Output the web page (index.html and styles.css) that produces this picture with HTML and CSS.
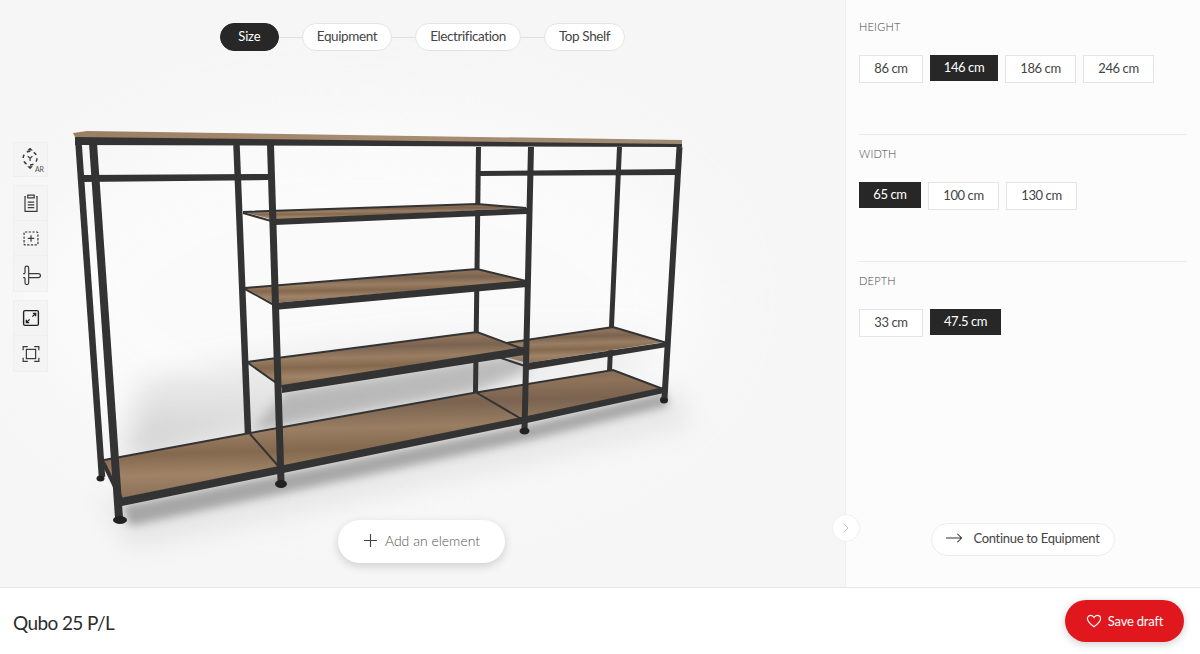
FILE: index.html
```html
<!DOCTYPE html>
<html lang="en">
<head>
<meta charset="utf-8">
<title>Qubo 25 P/L</title>
<link rel="stylesheet" href="styles.css">
</head>
<body>
<div class="app">
  <main class="workspace">
    <section class="stage">
      <svg class="scene" viewBox="0 0 845 587" aria-label="Qubo 25 shelving unit">
        <defs>
          <filter id="b4" x="-30%" y="-30%" width="160%" height="160%"><feGaussianBlur stdDeviation="4"/></filter>
          <filter id="b12" x="-30%" y="-50%" width="160%" height="200%"><feGaussianBlur stdDeviation="12"/></filter>
          <filter id="b40" x="-30%" y="-50%" width="160%" height="200%"><feGaussianBlur stdDeviation="40"/></filter>
          <linearGradient id="wood" x1="0" y1="0" x2=".12" y2="1">
            <stop offset="0" stop-color="#78624e"/><stop offset=".18" stop-color="#8e7259"/>
            <stop offset=".32" stop-color="#7a6350"/><stop offset=".5" stop-color="#9a7e63"/>
            <stop offset=".66" stop-color="#84694f"/><stop offset=".82" stop-color="#a08367"/>
            <stop offset="1" stop-color="#8a7058"/>
          </linearGradient>
          <linearGradient id="top" x1="0" y1="0" x2="1" y2="0">
            <stop offset="0" stop-color="#9b7f62"/><stop offset=".5" stop-color="#a78c6f"/><stop offset="1" stop-color="#a08a73"/>
          </linearGradient>
          <linearGradient id="wall" x1="0" y1="0" x2="0" y2="1">
            <stop offset="0" stop-color="#999" stop-opacity="0"/><stop offset="1" stop-color="#888" stop-opacity=".4"/>
          </linearGradient>
        </defs>
        <ellipse class="glow" cx="370" cy="300" rx="340" ry="190" filter="url(#b40)"/>
        <polygon class="wall" points="140,380 290,350 480,320 660,325 640,372 478,396 250,436 125,462"/>
        <polygon class="under" points="285,392 522,352 530,370 474,392 250,432"/>
        <polygon class="floor" points="122,506 530,424 665,392 668,406 530,440 130,526" filter="url(#b4)"/>
        <polygon class="floor-soft" points="100,500 530,414 680,390 690,425 530,465 130,548" filter="url(#b12)"/>

        <g class="frame back">
          <line x1="78.5" y1="143" x2="102" y2="477"/>
          <line x1="236.5" y1="145" x2="248" y2="433"/>
          <line class="thin" x1="478.5" y1="147" x2="475.5" y2="393"/>
          <line class="thin" x1="619.5" y1="147" x2="609.5" y2="371"/>
        </g>
        <ellipse class="foot" cx="100.500" cy="478.500" rx="4" ry="3"/>
        <ellipse class="foot" cx="664" cy="400" rx="4" ry="3.500"/>

        <polygon class="wood" points="104,460 250,433 473,393 613,370 661,388 527,417 122,498"/>
        <g class="frame thin-all">
          <polyline points="104,460 250,433 473,393 613,370 663,389"/>
          <line x1="250" y1="434" x2="280" y2="468"/>
          <line x1="477" y1="393" x2="525" y2="421"/>
        </g>
        <polygon class="frame-fill" points="120,498 527,416 664,387 664,393 527,423 122,506"/>
        <line class="frame side" x1="103" y1="462" x2="122" y2="501"/>

        <polygon class="wood" points="508,342 613,327 665,342 527,363 498,355"/>
        <polyline class="frame thin-line" points="506,343 613,327 667,343"/>
        <polygon class="frame-fill" points="527,363 667,342 667,347 528,370"/>
        <line class="frame thin-line" x1="498" y1="357" x2="528" y2="367"/>

        <polygon class="wood" points="247,362 477,332 523,349 282,387"/>
        <polyline class="frame thin-line" points="247,362 477,332 523,349"/>
        <line class="frame thin-line" x1="248" y1="363" x2="282" y2="387"/>
        <polygon class="frame-fill" points="282,385 524,347 524,355 282,393"/>

        <polygon class="wood" points="245,288 477,269 526,281 273,303"/>
        <polyline class="frame thin-line" points="245,288 477,269 526,281"/>
        <line class="frame thin-line" x1="245" y1="289" x2="274" y2="305"/>
        <polygon class="frame-fill" points="274,303 527,280 527,287 274,310"/>

        <polygon class="wood" points="243,212 477,204 526,208 275,220"/>
        <polyline class="frame thin-line" points="243,212 477,204 526,208"/>
        <line class="frame thin-line" x1="243" y1="213" x2="275" y2="222"/>
        <polygon class="frame-fill" points="275,219 527,208 527,214 275,225"/>

        <polygon class="frame-fill" points="82,175 268,174 268,180 82,182"/>
        <polygon class="frame-fill" points="480,171 680,169 680,175 480,176"/>

        <g class="frame">
          <line class="wide" x1="93" y1="143" x2="119" y2="518"/>
          <line x1="270.500" y1="145" x2="281" y2="481"/>
          <line class="slim" x1="531" y1="147" x2="524.500" y2="430"/>
          <line class="slim" x1="679.500" y1="147" x2="664.500" y2="398"/>
        </g>
        <ellipse class="foot" cx="120" cy="520" rx="7" ry="4"/>
        <ellipse class="foot" cx="281" cy="484" rx="6" ry="4"/>
        <ellipse class="foot" cx="524.500" cy="431" rx="5" ry="3.500"/>

        <polygon class="frame-fill" points="75,136 682,141 682,147 75,145"/>
        <polygon class="top" points="73,133 87,131 682,140 682,144 75,137"/>
      </svg>

      <nav class="steps">
        <a class="step active">Size</a><i class="link"></i>
        <a class="step">Equipment</a><i class="link"></i>
        <a class="step">Electrification</a><i class="link"></i>
        <a class="step">Top Shelf</a>
      </nav>

      <div class="tools">
        <div class="tool-group">
          <button class="tool ar">
            <svg viewBox="0 0 26 26" class="icon"><circle cx="12" cy="11" r="7.500" class="dash"/><path d="M9.500 9 12 11l2.500-2M12 11v3M12 .5 10.500 2h3zM12 22l-1.500-1.500h3z"/></svg>
            <span class="ar-label">AR</span>
          </button>
        </div>
        <div class="tool-group">
          <button class="tool"><svg viewBox="0 0 26 26" class="icon"><path d="M7.500 6H6.500v16h13V6h-1M9.500 4.500h7v3h-7zM9.500 12h7M9.500 15h7M9.500 18h7"/></svg></button>
          <button class="tool"><svg viewBox="0 0 26 26" class="icon"><rect x="5.500" y="6.500" width="15" height="14" rx="1" class="dashed"/><path d="M13 10v7M9.500 13.500h7"/></svg></button>
          <button class="tool"><svg viewBox="0 0 26 26" class="icon"><path d="M11 12.500h10a2.200 2.200 0 0 1 0 4.400H11M6.500 12.500V6.500a2 2 0 0 1 4 0v16a2 2 0 0 1-4 0V17M4.500 12.500h2M4.500 17h2"/></svg></button>
        </div>
        <div class="tool-group">
          <button class="tool"><svg viewBox="0 0 26 26" class="icon icon-strong"><rect x="5" y="5" width="16" height="16" rx="1.500"/><path d="M14.500 11.500 18 8M15 8h3v3M11.500 14.500 8 18M8 15v3h3"/></svg></button>
          <button class="tool"><svg viewBox="0 0 26 26" class="icon"><rect x="8" y="8" width="10" height="10"/><path d="M4.500 9V5h5M16.500 5h5v4M21.500 17v4h-5M9.500 21h-5v-4"/></svg></button>
        </div>
      </div>

      <button class="add"><svg viewBox="0 0 16 16" class="add-icon"><path d="M8 1v14M1 8h14"/></svg>Add an element</button>
    </section>

    <aside class="panel">
      <button class="collapse"><svg viewBox="0 0 10 14" class="chev"><path d="M2 1.500 7.500 7 2 12.500"/></svg></button>
      <section class="option">
        <h2>Height</h2>
        <div class="choices"><a class="choice w64">86 cm</a><a class="choice on w68">146 cm</a><a class="choice w71">186 cm</a><a class="choice w71">246 cm</a></div>
      </section>
      <section class="option">
        <h2>Width</h2>
        <div class="choices"><a class="choice on w62">65 cm</a><a class="choice w71">100 cm</a><a class="choice w71">130 cm</a></div>
      </section>
      <section class="option">
        <h2>Depth</h2>
        <div class="choices"><a class="choice w64">33 cm</a><a class="choice on w71">47.5 cm</a></div>
      </section>
      <div class="next-wrap">
        <button class="next"><svg viewBox="0 0 18 12" class="next-icon"><path d="M0 6h16.500M12 1.500 16.500 6 12 10.500"/></svg>Continue to Equipment</button>
      </div>
    </aside>
  </main>

  <footer class="bar">
    <div class="name">Qubo 25 P/L</div>
    <button class="save"><svg viewBox="0 0 18 16" class="heart"><path d="M9 14.500C4 10.800 1.500 8.300 1.500 5.400 1.500 3.200 3.200 1.500 5.200 1.500 6.800 1.500 8.200 2.400 9 4c.8-1.600 2.200-2.500 3.800-2.500 2 0 3.700 1.700 3.700 3.900 0 2.900-2.500 5.400-7.500 9.100z"/></svg>Save draft</button>
  </footer>
</div>
</body>
</html>
```
FILE: styles.css
```css
* { box-sizing: border-box; }
html, body { margin: 0; height: 100%; }
body { font-family: Lato, "Open Sans", sans-serif; color: #333; background: #fff; overflow: hidden; }
button { font: inherit; color: inherit; cursor: pointer; }
.app { width: 1200px; height: 654px; display: flex; flex-direction: column; }
.workspace { height: 588px; display: flex; border-bottom: 1px solid #e6e6e6; }

.stage { position: relative; width: 845px; background: #f6f6f6; padding-top: 23px; }
.scene { position: absolute; left: 0; top: 0; width: 845px; height: 587px; }
.glow { fill: #fff; opacity: .55; }
.wall { fill: url(#wall); filter: blur(14px); }
.under { fill: #8d8d8d; opacity: .5; filter: blur(6px); }
.floor { fill: #555; opacity: .5; }
.floor-soft { fill: #aaa; opacity: .22; }
.wood { fill: url(#wood); }
.top { fill: url(#top); }
.frame line, .frame polyline, .frame { stroke: #333; fill: none; stroke-width: 7; }
.frame line.wide { stroke-width: 8; }
.frame.back line { stroke-width: 6.5; }
.frame line.thin, .frame.back line.thin { stroke-width: 5; }
.frame line.slim { stroke-width: 6; }
.frame.thin-all polyline, .frame.thin-all line { stroke-width: 2; }
.frame.thin-line { stroke-width: 2; }
.frame.side { stroke-width: 4; }
.frame-fill { fill: #333; }
.foot { fill: #222; }

.steps { position: relative; display: flex; justify-content: center; align-items: center; }
.step { display: block; height: 28px; line-height: 25px; padding: 0 14px; border: 1px solid #e4e4e4; border-radius: 14px; background: #fff; font-size: 13.5px; letter-spacing: -.4px; color: #444; }
.step.active { background: #272727; border-color: #272727; color: #fff; padding: 0 17.5px; font-size: 13px; letter-spacing: -.2px; }
.link { display: block; width: 23px; height: 1px; background: #e0e0e0; }

.tools { position: absolute; left: 13px; top: 142px; display: flex; flex-direction: column; gap: 8px; }
.tool-group { display: flex; flex-direction: column; width: 35px; background: #f4f4f4; border: 1px solid #efefef; }
.tool { position: relative; width: 33px; height: 35px; padding: 0; border: 0; border-bottom: 1px solid #efefef; background: transparent; display: flex; align-items: center; justify-content: center; }
.tool:last-child { border-bottom: 0; }
.tool.ar { height: 33px; }
.icon { width: 24px; height: 24px; fill: none; stroke: #3a3a3a; stroke-width: 1.300; }
.icon-strong { stroke: #222; stroke-width: 1.500; }
.dash { stroke-dasharray: 4 3.850; stroke-width: 1.600; }
.dashed { stroke-dasharray: 2.500 1.500; }
.ar-label { position: absolute; right: 3px; bottom: 3px; font-size: 7px; line-height: 8px; color: #555; }

.add { position: absolute; left: 338px; top: 520px; width: 167px; height: 43px; padding: 0 0 2px; border: 0; border-radius: 22px; background: #fff; box-shadow: 0 3px 10px rgba(0,0,0,.16); display: flex; align-items: center; justify-content: center; gap: 7px; font-size: 14px; font-weight: 300; color: #555; }
.add-icon { width: 15px; height: 15px; fill: none; stroke: #444; stroke-width: 1.200; }

.panel { position: relative; flex: 1; background: #fcfcfc; border-left: 1px solid #eee; padding: 7px 13px 0 13px; display: flex; flex-direction: column; }
.option { height: 127px; padding-top: 12px; border-top: 1px solid #eaeaea; }
.option:first-of-type { border-top-color: transparent; }
h2 { margin: 0; font-size: 11px; line-height: 14px; font-weight: 300; letter-spacing: .2px; text-transform: uppercase; color: #444; }
.choices { display: flex; align-items: flex-start; gap: 7px; margin-top: 21px; }
.choice { display: block; height: 28px; line-height: 25px; text-align: center; border: 1px solid #e4e4e4; background: #fff; font-size: 13px; letter-spacing: -.4px; color: #444; }
.choice.on { height: 26px; line-height: 22px; background: #272727; border-color: #272727; color: #fff; }
.w62 { width: 62px; }
.w64 { width: 64px; }
.w68 { width: 68px; }
.w71 { width: 71px; }

.next-wrap { position: absolute; left: 0; right: 0; top: 523px; display: flex; justify-content: center; }
.next { height: 33px; width: 184px; padding: 0 0 3px; background: #fff; border: 1px solid #ececec; border-radius: 17px; display: flex; align-items: center; justify-content: center; gap: 10px; font-size: 13px; letter-spacing: -.3px; color: #444; }
.next-icon { width: 17px; height: 12px; fill: none; stroke: #333; stroke-width: 1.100; }
.collapse { position: absolute; left: -14px; top: 514px; width: 28px; height: 28px; padding: 0; border: 1px solid #f0f0f0; border-radius: 50%; background: #fff; display: flex; align-items: center; justify-content: center; }
.chev { width: 8px; height: 12px; fill: none; stroke: #bbb; stroke-width: 1.100; }

.bar { flex: 1; display: flex; align-items: center; justify-content: space-between; padding: 0 16px 0 13px; background: #fff; }
.name { margin-top: 2px; font-size: 19px; letter-spacing: -.6px; color: #2b2b2b; }
.save { width: 119px; height: 42px; padding: 0 0 1px; border: 0; border-radius: 21px; background: #e1171e; color: #fff; font-size: 13px; letter-spacing: -.2px; display: flex; align-items: center; justify-content: center; gap: 6px; box-shadow: 0 2px 8px rgba(0,0,0,.2); }
.heart { width: 16px; height: 14px; fill: none; stroke: #fff; stroke-width: 1.300; }
```
